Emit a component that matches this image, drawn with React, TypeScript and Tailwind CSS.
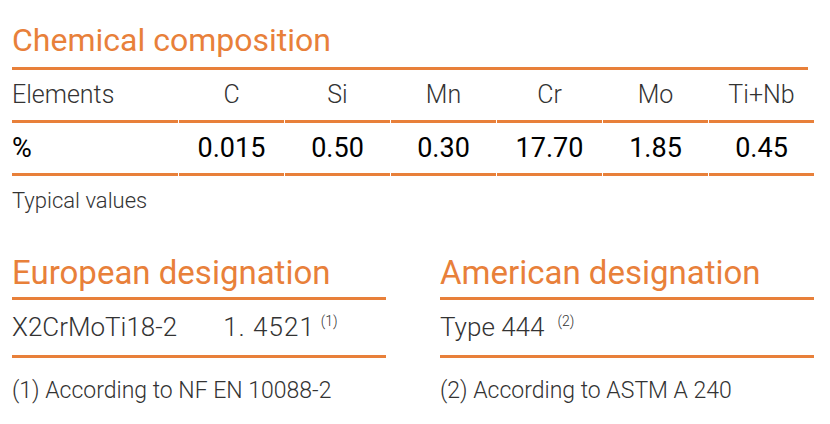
const ORANGE = "bg-[#e8803a]";

const elements = ["C", "Si", "Mn", "Cr", "Mo", "Ti+Nb"];
const values = ["0.015", "0.50", "0.30", "17.70", "1.85", "0.45"];

function Row({ label, cells, dark }: { label: string; cells: string[]; dark?: boolean }) {
  const tone = dark ? "font-normal text-[27px] text-black" : "font-light text-[25px] text-[#333]";
  return (
    <div className="flex gap-[1px]">
      <div className="w-[166px]">
        <div className={`flex h-[50px] items-center ${tone}`}>{label}</div>
        <div className={`h-[3px] ${ORANGE}`} />
      </div>
      {cells.map((c) => (
        <div key={c} className="w-[105px]">
          <div className={`flex h-[50px] items-center justify-center ${tone}`}>{c}</div>
          <div className={`h-[3px] ${ORANGE}`} />
        </div>
      ))}
    </div>
  );
}

function Designation({ title, children, note }: { title: string; children: React.ReactNode; note: string }) {
  return (
    <div className="w-[374px]">
      <h2 className="flex h-[73px] items-end pb-[8px] text-[33px] leading-none font-normal text-[#e8803a]">{title}</h2>
      <div className={`h-[3px] ${ORANGE}`} />
      <div className="flex h-[55px] items-center text-[26px] font-light text-[#333]">{children}</div>
      <div className={`h-[3px] ${ORANGE}`} />
      <div className="flex h-[66px] items-center text-[23px] font-light text-[#333]">{note}</div>
    </div>
  );
}

export default function App() {
  return (
    <div className="h-[424px] w-[830px] bg-white pl-[12px]" style={{ fontFamily: 'Roboto, sans-serif' }}>
      <h1 className="flex h-[67px] items-end pb-[11px] text-[32px] leading-none font-normal text-[#e8803a]">Chemical composition</h1>
      <div className={`h-[3px] w-[796px] ${ORANGE}`} />
      <Row label="Elements" cells={elements} />
      <Row label="%" cells={values} dark />
      <div className="flex h-[48px] items-center text-[22px] font-light text-[#333]">Typical values</div>
      <div className="flex gap-[54px]">
        <Designation title="European designation" note="(1) According to NF EN 10088-2">
          <span>X2CrMoTi18-2</span>
          <span className="ml-[46px] tracking-[1px]">1.&nbsp;4521</span>
          <sup className="ml-[6px] text-[14px]">(1)</sup>
        </Designation>
        <Designation title="American designation" note="(2) According to ASTM A 240">
          <span>Type 444</span>
          <sup className="ml-[13px] text-[14px]">(2)</sup>
        </Designation>
      </div>
    </div>
  );
}
